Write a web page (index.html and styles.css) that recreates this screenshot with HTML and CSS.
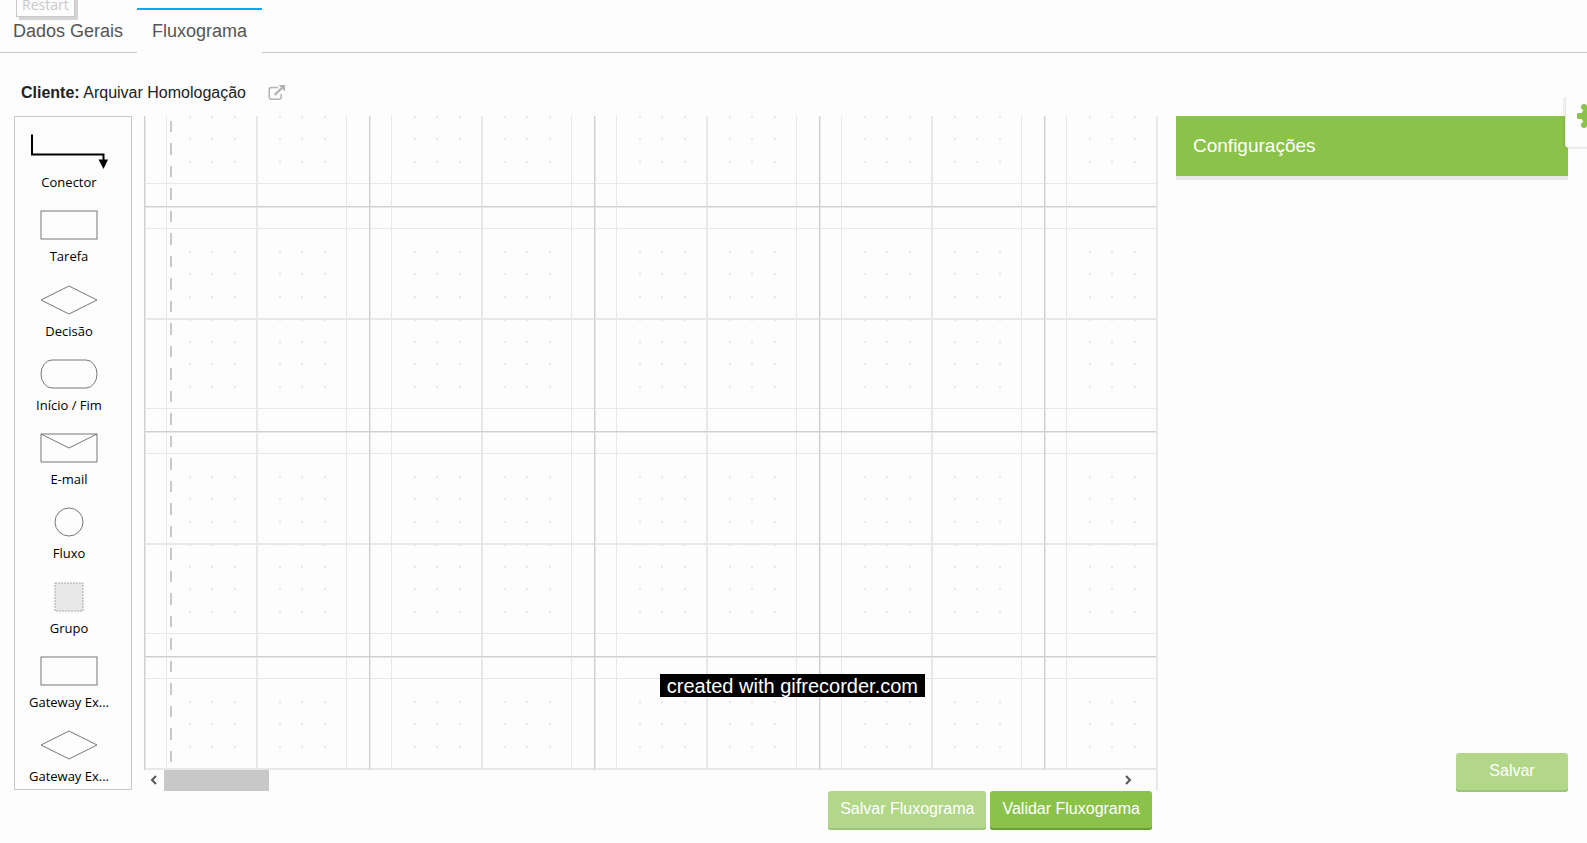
FILE: index.html
```html
<!DOCTYPE html>
<html lang="pt-BR">
<head>
<meta charset="utf-8">
<title>Fluxograma</title>
<link rel="stylesheet" href="styles.css">
</head>
<body>
<button class="restart" type="button">Restart</button>
<nav class="tabs">
  <a class="tab" href="#dados">Dados Gerais</a>
  <a class="tab tab-active" href="#fluxograma" aria-current="page">Fluxograma</a>
</nav>
<div class="client">
  <p class="client-name"><strong>Cliente:</strong> Arquivar Homologação</p>
  <a class="client-link" href="#cliente" aria-label="Abrir cliente">
    <svg width="18" height="16" viewBox="0 0 18 16" fill="none" stroke="#b4b4b4" stroke-width="1.5"><path d="M10 2.5H3.5Q1.2 2.5 1.2 4.8V12Q1.2 14.2 3.5 14.2H11Q13.2 14.2 13.2 12V9"/><path d="M6.5 10L14 2.8" stroke-width="2.4"/><path d="M10.5 0H17V6.5Z" fill="#b4b4b4" stroke="none"/></svg>
  </a>
</div>
<main class="workspace">
  <ul class="palette">
    <li class="shape"><svg width="78" height="38" viewBox="0 0 78 38"><path d="M2 2.500V22.500H73.500V29" fill="none" stroke="#000" stroke-width="2"/><path d="M68.500 27.500H78L73.500 37Z"/></svg><span>Conector</span></li>
    <li class="shape"><svg width="58" height="30" viewBox="0 0 58 30"><rect x="1" y="1" width="56" height="28"/></svg><span>Tarefa</span></li>
    <li class="shape"><svg width="58" height="30" viewBox="0 0 58 30"><path d="M1 15L29 1L57 15L29 29Z"/></svg><span>Decisão</span></li>
    <li class="shape"><svg width="58" height="30" viewBox="0 0 58 30"><rect x="1" y="1" width="56" height="28" rx="11" ry="14"/></svg><span>Início / Fim</span></li>
    <li class="shape"><svg width="58" height="30" viewBox="0 0 58 30"><path d="M1 1H57V29H1ZL29 15L57 1"/></svg><span>E-mail</span></li>
    <li class="shape"><svg width="58" height="30" viewBox="0 0 58 30"><circle cx="29" cy="15" r="14"/></svg><span>Fluxo</span></li>
    <li class="shape"><svg width="58" height="30" viewBox="0 0 58 30"><rect class="group-box" x="15" y="1" width="28" height="28"/></svg><span>Grupo</span></li>
    <li class="shape"><svg width="58" height="30" viewBox="0 0 58 30"><rect x="1" y="1" width="56" height="28"/></svg><span>Gateway Ex...</span></li>
    <li class="shape"><svg width="58" height="30" viewBox="0 0 58 30"><path d="M1 15L29 1L57 15L29 29Z"/></svg><span>Gateway Ex...</span></li>
  </ul>
  <section class="editor">
    <div class="canvas">
      <svg class="grid" width="100%" height="100%" shape-rendering="crispEdges">
        <defs>
          <pattern id="cells" width="225" height="225" patternUnits="userSpaceOnUse" patternTransform="translate(0 90)">
            <g fill="#e8e8e8">
              <path id="row" d="M45 45h2v2h-2zM67 45h2v2h-2zM90 45h2v2h-2zM112 45h2v2h-2zM135 45h2v2h-2zM157 45h2v2h-2zM180 45h2v2h-2z"/>
              <use href="#row" y="22"/><use href="#row" y="45"/><use href="#row" y="68"/><use href="#row" y="90"/><use href="#row" y="112"/><use href="#row" y="135"/>
              <path d="M22 0h1v225h-1zM202 0h1v225h-1zM0 22h225v1H0zM0 202h225v1H0z"/>
              <path d="M112 0h2v225h-2zM0 112h225v2H0zM0 0h2v225H0zM0 0h225v2H0z"/>
            </g>
            <path d="M0 0h1v225H0zM0 0h225v1H0z" fill="#d0d0d0"/>
          </pattern>
        </defs>
        <rect width="100%" height="100%" fill="url(#cells)"/>
        <path d="M27 4.500V647" stroke="#c8c8c8" stroke-width="2" stroke-dasharray="11.500 11"/>
      </svg>
      <p class="watermark">created with gifrecorder.com</p>
    </div>
    <div class="scrollbar">
      <button class="scroll-arrow" type="button" aria-label="Rolar para a esquerda"><svg width="8" height="10" viewBox="0 0 8 10"><path d="M6 1L2 5L6 9"/></svg></button>
      <div class="scroll-track"><div class="scroll-thumb"></div></div>
      <button class="scroll-arrow" type="button" aria-label="Rolar para a direita"><svg width="8" height="10" viewBox="0 0 8 10"><path d="M2 1L6 5L2 9"/></svg></button>
    </div>
    <div class="actions">
      <button class="btn btn-muted" type="button">Salvar Fluxograma</button>
      <button class="btn" type="button">Validar Fluxograma</button>
    </div>
  </section>
  <aside class="settings">
    <h2 class="settings-title">Configurações</h2>
    <button class="btn btn-muted btn-save" type="button">Salvar</button>
  </aside>
</main>
<button class="gear" type="button" aria-label="Preferências"><svg width="26" height="26" viewBox="0 0 26 26" fill="#8bc34a"><circle cx="13" cy="13" r="9"/><rect y="10" width="26" height="6" rx="1"/><rect x="10" width="6" height="26" rx="1"/><circle cx="7" cy="4" r="3"/><circle cx="7" cy="22" r="3"/><circle cx="19" cy="4" r="3"/><circle cx="19" cy="22" r="3"/></svg></button>
</body>
</html>
```

FILE: styles.css
```css
* { box-sizing: border-box; }

body {
  margin: 0;
  min-height: 100vh;
  background: #fdfdfd;
  color: #212121;
  font-family: "Liberation Sans", Arial, sans-serif;
  font-size: 16px;
  position: relative;
  overflow: hidden;
}

button { font-family: inherit; cursor: pointer; }

.restart {
  position: absolute;
  top: -12px;
  left: 16px;
  height: 29px;
  padding: 5px 5px 0;
  border: 1px solid #c8c8c8;
  background: #fdfdfd;
  box-shadow: 3px 3px 0 #d4d4d4;
  color: #c8c8c8;
  font: 14px/20px "Open Sans", "Noto Sans", sans-serif;
}

.tabs {
  display: flex;
  height: 53px;
  padding-top: 8px;
  box-shadow: inset 0 -1px #c8c8c8;
}

.tab {
  padding: 9px 14px 0 13px;
  border-top: 2px solid transparent;
  color: #555;
  font-size: 18px;
  line-height: 24px;
  text-decoration: none;
}

.tab-active {
  padding: 9px 15px 0;
  background: #fdfdfd;
  border-color: #03a9f4;
}

.client {
  display: flex;
  align-items: center;
  gap: 22px;
  height: 63px;
  padding: 17px 21px 0;
}

.client-name { margin: 0; }
.client-link { display: flex; }

.workspace {
  display: grid;
  grid-template-columns: 118px 1fr 392px;
  padding: 0 19px 0 14px;
}

.palette {
  display: flex;
  flex-direction: column;
  justify-content: space-between;
  height: 674px;
  margin: 0;
  padding: 15px 8px 4px 0;
  border: 1px solid #c8c8c8;
  list-style: none;
  color: #000;
  font: 13px/18px "Open Sans", "Noto Sans", sans-serif;
}

.shape {
  display: flex;
  flex-direction: column;
  align-items: center;
  justify-content: space-between;
  height: 55px;
}

.shape:first-child { height: 59px; }

.shape rect,
.shape circle,
.shape path { stroke: #777; fill: none; }
.shape:first-child path { stroke: #000; }
.shape:first-child path:last-child { fill: #000; stroke: none; }
.shape .group-box { fill: #e8e8e8; stroke: #aaa; stroke-dasharray: 2 1; }

.editor {
  display: flex;
  flex-direction: column;
  margin: 0 18px 0 12px;
}

.canvas {
  position: relative;
  height: 654px;
  border-right: 2px solid #e8e8e8;
}

.grid { display: block; }

.watermark {
  position: absolute;
  right: 231px;
  bottom: 73px;
  margin: 0;
  padding: 1px 7px 0;
  background: #000;
  color: #fff;
  font-size: 20px;
  line-height: 22px;
}

.scrollbar {
  display: flex;
  height: 21px;
  padding-right: 18px;
  border-right: 2px solid #e8e8e8;
}

.scroll-arrow {
  display: flex;
  align-items: center;
  justify-content: center;
  width: 20px;
  padding: 0 0 2px;
  border: 0;
  background: none;
}

.scroll-arrow path { fill: none; stroke: #555; stroke-width: 2; }
.scroll-track { flex: 1; }
.scroll-thumb { width: 105px; height: 21px; background: #c8c8c8; }

.actions {
  display: flex;
  justify-content: flex-end;
  gap: 4px;
  padding-right: 6px;
}

.btn {
  height: 39px;
  padding: 0 12px 4px;
  border: 0;
  border-radius: 3px;
  background: #8bc34a;
  box-shadow: inset 0 -2px #689f38;
  color: #fff;
  font-size: 16px;
}

.btn-muted {
  background: #b2d788;
  box-shadow: inset 0 -2px #9cc47e;
}

.settings {
  display: flex;
  flex-direction: column;
  justify-content: space-between;
  height: 676px;
}

.settings-title {
  margin: 0;
  padding: 0 17px;
  background: #8bc34a;
  box-shadow: 0 4px #e8e8e8;
  color: #fff;
  font-size: 19px;
  font-weight: 400;
  line-height: 60px;
}

.btn-save { align-self: flex-end; width: 112px; }

.gear {
  position: absolute;
  top: 97px;
  right: -28px;
  display: flex;
  align-items: flex-start;
  width: 50px;
  height: 51px;
  padding: 6px 11px;
  border: 1px solid #e8e8e8;
  border-top: 0;
  border-radius: 0 0 0 4px;
  background: #fdfdfd;
  box-shadow: -2px 1px rgba(0, 0, 0, 0.05);
}
```
